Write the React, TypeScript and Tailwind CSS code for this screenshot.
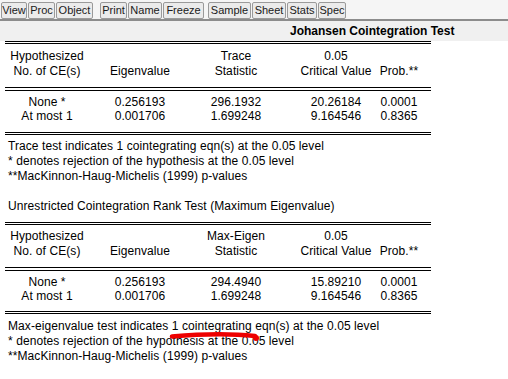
import React from "react";

const Btn = ({ label, w, ml = 1 }: { label: string; w: number; ml?: number }) => (
  <div
    className="h-[17px] flex items-center justify-center border border-[#9a9a9a] rounded-[2px] bg-[#ebebeb] text-[11px] leading-none text-[#1a1a1a] shrink-0"
    style={{ width: w, marginLeft: ml }}
  >
    {label}
  </div>
);

const COLS = "grid grid-cols-[84px_102px_90px_110px_16px] ml-[5px] w-[426px]";

const Cell = ({ children }: { children: React.ReactNode }) => (
  <div className="flex justify-center whitespace-nowrap text-center">{children}</div>
);

const Line = ({ thick }: { thick?: boolean }) => (
  <div className={"w-[426px] ml-[5px] border-t border-b border-black " + (thick ? "h-[4px]" : "h-[3px]")} />
);

const Table = ({
  stat1,
  stat2,
  vals,
  headPt,
  rowPb,
}: {
  stat1: string;
  stat2: string;
  vals: string[][];
  headPt: string;
  rowPb: string;
}) => (
  <div>
    <Line />
    <div className={COLS + " leading-[15px] pb-[8px] " + headPt}>
      <Cell>
        <div>Hypothesized<br />No. of CE(s)</div>
      </Cell>
      <Cell>
        <div><br />Eigenvalue</div>
      </Cell>
      <Cell>
        <div>{stat1}<br />{stat2}</div>
      </Cell>
      <Cell>
        <div>0.05<br />Critical Value</div>
      </Cell>
      <Cell>
        <div><br />Prob.**</div>
      </Cell>
    </div>
    <Line thick />
    <div className={"pt-[4px] " + rowPb}>
      {vals.map((v, i) => (
        <div key={i} className={COLS + " leading-[14px]"}>
          {v.map((c, j) => (
            <Cell key={j}>{c}</Cell>
          ))}
        </div>
      ))}
    </div>
    <Line />
  </div>
);

export default function App() {
  return (
    <div
      className="w-[508px] h-[379px] bg-white overflow-hidden relative text-black text-[12px]"
      style={{ fontFamily: '"Liberation Sans", Arial, sans-serif' }}
    >
      <div className="h-[19px] flex items-start pt-[2px] bg-[#f5f5f5]">
        <Btn label="View" w={26} ml={1} />
        <Btn label="Proc" w={27} />
        <Btn label="Object" w={37} />
        <Btn label="Print" w={27} ml={7} />
        <Btn label="Name" w={34} />
        <Btn label="Freeze" w={41} />
        <Btn label="Sample" w={43} ml={4} />
        <Btn label="Sheet" w={34} />
        <Btn label="Stats" w={30} />
        <Btn label="Spec" w={28} />
      </div>
      <div className="border-t-2 border-[#8c8c8c] h-[22px] bg-[#f0f0f0] flex items-center pl-[290px] font-bold text-[12px]">
        Johansen Cointegration Test
      </div>
      <div className="tracking-[0.08px]">
        <Table
          stat1="Trace"
          stat2="Statistic"
          headPt="pt-[5px]"
          rowPb="pb-[9px]"
          vals={[
            ["None *", "0.256193", "296.1932", "20.26184", "0.0001"],
            ["At most 1", "0.001706", "1.699248", "9.164546", "0.8365"],
          ]}
        />
        <div className="pl-[8px] pt-[4px] leading-[15px]">
          <div>Trace test indicates 1 cointegrating eqn(s) at the 0.05 level</div>
          <div>* denotes rejection of the hypothesis at the 0.05 level</div>
          <div>**MacKinnon-Haug-Michelis (1999) p-values</div>
          <div className="h-[15px]" />
          <div>Unrestricted Cointegration Rank Test (Maximum Eigenvalue)</div>
        </div>
        <div className="h-[8px]" />
        <Table
          stat1="Max-Eigen"
          stat2="Statistic"
          headPt="pt-[4px]"
          rowPb="pb-[8px]"
          vals={[
            ["None *", "0.256193", "294.4940", "15.89210", "0.0001"],
            ["At most 1", "0.001706", "1.699248", "9.164546", "0.8365"],
          ]}
        />
        <div className="pl-[8px] pt-[5px] leading-[15px]">
          <div>Max-eigenvalue test indicates 1 cointegrating eqn(s) at the 0.05 level</div>
          <div>* denotes rejection of the hypothesis at the 0.05 level</div>
          <div>**MacKinnon-Haug-Michelis (1999) p-values</div>
        </div>
      </div>
      <svg className="absolute left-0 top-0 pointer-events-none" width="508" height="379">
        <path
          d="M172 336.5 C 200 334, 232 333.5, 255 336"
          stroke="#ee0000"
          strokeWidth="4.6"
          fill="none"
          strokeLinecap="round"
        />
        <circle cx="256" cy="338" r="3" fill="#ee0000" />
      </svg>
    </div>
  );
}
